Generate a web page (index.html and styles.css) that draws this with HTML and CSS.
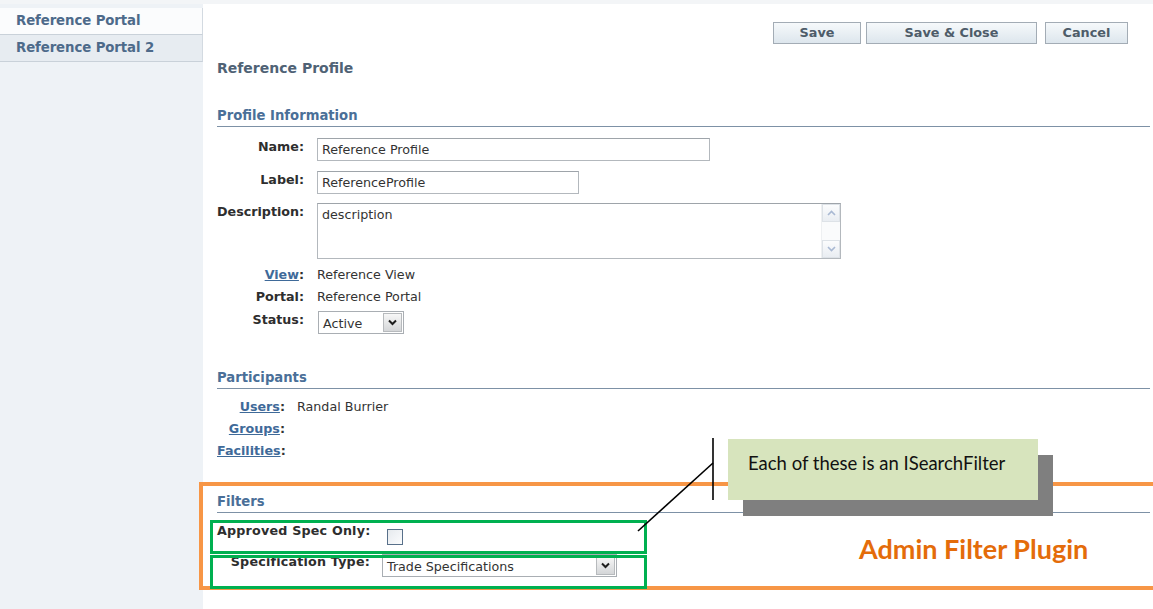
FILE: index.html
```html
<!DOCTYPE html>
<html lang="en">
<head>
<meta charset="utf-8">
<title>Reference Profile</title>
<link rel="stylesheet" href="styles.css">
</head>
<body>
<div class="page">
  <aside class="sidebar">
    <div class="nav-item nav-item-first">Reference Portal</div>
    <div class="nav-item nav-item-second">Reference Portal 2</div>
  </aside>

  <main class="content">
    <div class="toolbar">
      <button class="btn btn-save">Save</button>
      <button class="btn btn-save-close">Save &amp; Close</button>
      <button class="btn btn-cancel">Cancel</button>
    </div>

    <h1 class="page-title">Reference Profile</h1>

    <section class="section section-profile">
      <h2 class="section-title">Profile Information</h2>
      <div class="form-row row-name">
        <span class="field-label">Name:</span>
        <input class="text-input input-name" type="text" value="Reference Profile">
      </div>
      <div class="form-row row-label">
        <span class="field-label">Label:</span>
        <input class="text-input input-label" type="text" value="ReferenceProfile">
      </div>
      <div class="form-row row-desc">
        <span class="field-label">Description:</span>
        <div class="textarea-box">
          <div class="textarea-text">description</div>
          <div class="scrollbar">
            <span class="scroll-btn">
              <svg width="9" height="6" viewBox="0 0 9 6"><path d="M1 5 L4.5 1.5 L8 5" fill="none" stroke="#a9b9d3" stroke-width="1.6"/></svg>
            </span>
            <span class="scroll-btn">
              <svg width="9" height="6" viewBox="0 0 9 6"><path d="M1 1 L4.5 4.5 L8 1" fill="none" stroke="#a9b9d3" stroke-width="1.6"/></svg>
            </span>
          </div>
        </div>
      </div>
      <div class="form-row row-text">
        <span class="field-label"><a class="link" href="#">View</a>:</span>
        <span class="field-value">Reference View</span>
      </div>
      <div class="form-row row-text">
        <span class="field-label">Portal:</span>
        <span class="field-value">Reference Portal</span>
      </div>
      <div class="form-row row-status">
        <span class="field-label">Status:</span>
        <div class="select select-status">
          <span class="select-value">Active</span>
          <span class="select-arrow">
            <svg width="9" height="7" viewBox="0 0 9 7"><path d="M1 1.5 L4.5 5 L8 1.5" fill="none" stroke="#1e1e1e" stroke-width="2"/></svg>
          </span>
        </div>
      </div>
    </section>

    <section class="section section-participants">
      <h2 class="section-title">Participants</h2>
      <div class="form-row part-row">
        <span class="part-label"><a class="link" href="#">Users</a>:</span>
        <span class="field-value">Randal Burrier</span>
      </div>
      <div class="form-row part-row">
        <span class="part-label"><a class="link" href="#">Groups</a>:</span>
      </div>
      <div class="form-row part-row">
        <span class="part-label"><a class="link" href="#">Facilities</a>:</span>
      </div>
    </section>

    <section class="section section-filters">
      <h2 class="section-title">Filters</h2>
      <div class="form-row filter-row filter-approved">
        <span class="filter-label">Approved Spec Only:</span>
        <span class="checkbox"></span>
      </div>
      <div class="form-row filter-row filter-type">
        <span class="filter-label">Specification Type:</span>
        <div class="select select-type">
          <span class="select-value">Trade Specifications</span>
          <span class="select-arrow">
            <svg width="9" height="7" viewBox="0 0 9 7"><path d="M1 1.5 L4.5 5 L8 1.5" fill="none" stroke="#1e1e1e" stroke-width="2"/></svg>
          </span>
        </div>
      </div>
    </section>
  </main>

  <!-- callout layer drawn over the form -->
  <div class="overlay">
    <div class="plugin-frame"></div>
    <div class="filter-mark mark-approved"></div>
    <div class="filter-mark mark-type"></div>
    <svg class="leader" width="1153" height="609" viewBox="0 0 1153 609">
      <line x1="713" y1="438" x2="713" y2="500" stroke="#000" stroke-width="1.6"/>
      <line x1="713" y1="463" x2="638" y2="531" stroke="#000" stroke-width="1.6"/>
    </svg>
    <div class="note-shadow"></div>
    <div class="note">Each of these is an ISearchFilter</div>
    <div class="plugin-caption">Admin Filter Plugin</div>
  </div>
</div>
</body>
</html>
```

FILE: styles.css
```css
html, body {
  margin: 0;
  padding: 0;
  background: #ffffff;
}

.page {
  position: relative;
  width: 1153px;
  height: 609px;
  overflow: hidden;
  display: flex;
  font-family: "DejaVu Sans", Verdana, sans-serif;
  color: #333333;
  border-top: 4px solid #f3f5f7;
  box-sizing: border-box;
}

/* left navigation */
.sidebar {
  width: 203px;
  flex: none;
  background: #eef2f6;
  padding-top: 4px;
  box-sizing: border-box;
}

.nav-item {
  height: 26px;
  line-height: 26px;
  padding-left: 16px;
  font-size: 13.3px;
  font-weight: bold;
  color: #4d6a8a;
  border-bottom: 1px solid #c9d1d9;
  border-right: 1px solid #d3dae1;
  letter-spacing: -0.1px;
  white-space: nowrap;
}

.nav-item-first {
  background: #fbfcfd;
}

.nav-item-second {
  background: #e7ecf1;
}

/* main form area */
.content {
  flex: 1;
  padding: 0 3px 0 14px;
  box-sizing: border-box;
}

.toolbar {
  display: flex;
  justify-content: flex-end;
  padding-top: 18px;
  padding-right: 22px;
}

.btn {
  height: 22px;
  margin: 0 0 0 5px;
  padding: 0 0 1px;
  border: 1px solid #a3acb5;
  background: linear-gradient(#f6f9fb, #dde6ed);
  font-family: "DejaVu Sans", Verdana, sans-serif;
  font-size: 12.8px;
  font-weight: bold;
  color: #4e5c69;
  box-sizing: border-box;
}

.btn-save { width: 88px; }
.btn-save-close { width: 171px; }
.btn-cancel { width: 83px; margin-left: 8px; }

.page-title {
  margin: 16px 0 0;
  font-size: 14px;
  line-height: 16px;
  font-weight: bold;
  color: #4f6275;
}

.section-title {
  margin: 0;
  font-size: 13.2px;
  line-height: 16px;
  font-weight: bold;
  color: #4a6f98;
  padding-bottom: 2px;
  border-bottom: 1px solid #7d91a6;
}

.section-profile { margin-top: 32px; }
.section-participants { margin-top: 36px; }
.section-filters { margin-top: 35px; }

.form-row {
  display: flex;
  align-items: flex-start;
}

.field-label {
  width: 87px;
  margin-right: 13px;
  padding-top: 1px;
  text-align: right;
  font-size: 12.7px;
  line-height: 16px;
  font-weight: bold;
  color: #2e2e2e;
  flex: none;
  white-space: nowrap;
}

.row-text .field-label {
  padding-top: 0;
}

.field-value {
  font-size: 12.7px;
  line-height: 16px;
  color: #333333;
}

.link {
  color: #3f6a99;
  text-decoration: underline;
}

.row-name { margin-top: 11px; }
.row-label { margin-top: 10px; }
.row-desc { margin-top: 9px; }
.row-text { margin-top: 8px; }
.row-text + .row-text { margin-top: 6px; }
.row-status { margin-top: 6px; }

.text-input {
  height: 23px;
  margin: 0;
  padding: 0 4px;
  border: 1px solid #b3b8bd;
  border-top-color: #9ea4aa;
  font-family: "DejaVu Sans", Verdana, sans-serif;
  font-size: 12.7px;
  color: #333333;
  box-sizing: border-box;
}

.input-name { width: 393px; }
.input-label { width: 262px; }

.textarea-box {
  width: 524px;
  height: 56px;
  border: 1px solid #b3b8bd;
  border-top-color: #9ea4aa;
  box-sizing: border-box;
  display: flex;
}

.textarea-text {
  flex: 1;
  padding: 3px 4px;
  font-size: 12.7px;
  line-height: 16px;
}

.scrollbar {
  width: 18px;
  display: flex;
  flex-direction: column;
  justify-content: space-between;
  background: #fafbfc;
  border-left: 1px solid #eef0f2;
}

.scroll-btn {
  height: 18px;
  display: flex;
  align-items: center;
  justify-content: center;
  background: linear-gradient(#fbfcfd, #e9edf2);
  border: 1px solid #dde2e7;
  box-sizing: border-box;
}

.select {
  height: 23px;
  display: flex;
  align-items: stretch;
  border: 1px solid #a9aeb3;
  box-sizing: border-box;
  background: #ffffff;
}

.select-status {
  width: 86px;
  margin-left: 1px;
}

.select-value {
  flex: 1;
  padding-left: 4px;
  font-size: 12.7px;
  line-height: 23px;
  color: #333333;
  white-space: nowrap;
}

.select-arrow {
  width: 19px;
  margin: 1px;
  display: flex;
  align-items: center;
  justify-content: center;
  background: linear-gradient(#f7f7f7, #d4d6d8);
  border: 1px solid #b7babd;
  box-sizing: border-box;
}

/* participants */
.part-row { margin-top: 6px; }
.section-title + .part-row { margin-top: 10px; }

.part-label {
  width: 68px;
  margin-right: 12px;
  text-align: right;
  font-size: 12.7px;
  line-height: 16px;
  font-weight: bold;
  flex: none;
  white-space: nowrap;
}

/* filters */
.filter-label {
  width: 153px;
  text-align: right;
  font-size: 12.7px;
  line-height: 16px;
  font-weight: bold;
  letter-spacing: 0.2px;
  color: #2e2e2e;
  flex: none;
  white-space: nowrap;
}

.filter-approved {
  margin-top: 10px;
  height: 31px;
}

.checkbox {
  width: 16px;
  height: 16px;
  margin: 6px 0 0 17px;
  border: 1px solid #58708a;
  background: linear-gradient(135deg, #e6eaee, #fbfcfd);
  box-sizing: border-box;
}

.select-type {
  width: 235px;
  margin-left: 12px;
}

/* callouts drawn over the form */
.overlay {
  position: absolute;
  left: 0;
  top: -4px;
  width: 1153px;
  height: 609px;
  pointer-events: none;
}

.plugin-frame {
  position: absolute;
  left: 199px;
  top: 482px;
  width: 970px;
  height: 108px;
  border: 4px solid #f79646;
  box-sizing: border-box;
}

.filter-mark {
  position: absolute;
  left: 210px;
  width: 437px;
  height: 34px;
  border: 3px solid #00b050;
  box-sizing: border-box;
}

.mark-approved { top: 520px; }
.mark-type { top: 555px; }

.leader {
  position: absolute;
  left: 0;
  top: 0;
}

.note-shadow {
  position: absolute;
  left: 743px;
  top: 455px;
  width: 310px;
  height: 61px;
  background: #7f7f7f;
}

.note {
  position: absolute;
  left: 728px;
  top: 439px;
  width: 310px;
  height: 61px;
  padding: 13px 0 0 20px;
  box-sizing: border-box;
  background: #d7e4bd;
  font-family: Lato, "Open Sans", sans-serif;
  font-size: 18.5px;
  line-height: 22px;
  color: #111111;
  white-space: nowrap;
}

.plugin-caption {
  position: absolute;
  left: 859px;
  top: 532px;
  font-family: Lato, "Open Sans", sans-serif;
  font-size: 27px;
  line-height: 34px;
  font-weight: bold;
  color: #e46c0a;
  white-space: nowrap;
}
```
